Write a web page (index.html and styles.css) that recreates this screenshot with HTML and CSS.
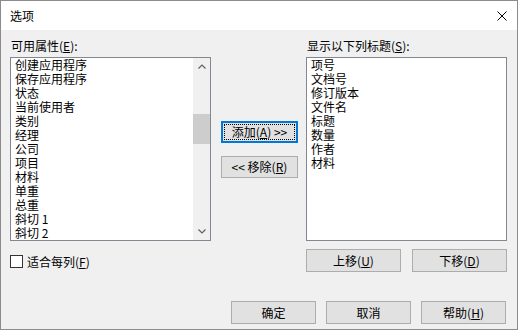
FILE: index.html
```html
<!DOCTYPE html>
<html lang="zh-CN">

<head>
    <meta charset="UTF-8">
    <meta name="viewport" content="width=device-width, initial-scale=1.0">
    <title>选项</title>
    <link rel="stylesheet" href="styles.css">
</head>

<body>
    <div class="okno">
        <div class="pasek">
            <span class="tytul">选项</span>
            <svg class="zamknij" width="10" height="10" viewBox="0 0 10 10">
                <path d="M0.5 0.5 L9.5 9.5 M9.5 0.5 L0.5 9.5" stroke="#000" stroke-width="1" fill="none" />
            </svg>
        </div>

        <div class="tresc">
            <div class="siatka">
                <div class="etykieta">可用属性(<u>E</u>):</div>
                <div></div>
                <div class="etykieta">显示以下列标题(<u>S</u>):</div>

                <div class="lista">
                    <div class="pozycje">
                        <div>创建应用程序</div>
                        <div>保存应用程序</div>
                        <div>状态</div>
                        <div>当前使用者</div>
                        <div>类别</div>
                        <div>经理</div>
                        <div>公司</div>
                        <div>项目</div>
                        <div>材料</div>
                        <div>单重</div>
                        <div>总重</div>
                        <div>斜切 1</div>
                        <div>斜切 2</div>
                    </div>
                    <div class="suwak">
                        <div class="strzalka">
                            <svg width="8" height="5" viewBox="0 0 8 5"><path d="M0.5 4.5 L4 1 L7.5 4.5" stroke="#606060" stroke-width="1.2" fill="none" /></svg>
                        </div>
                        <div class="tor">
                            <div class="kciuk"></div>
                        </div>
                        <div class="strzalka">
                            <svg width="8" height="5" viewBox="0 0 8 5"><path d="M0.5 0.5 L4 4 L7.5 0.5" stroke="#606060" stroke-width="1.2" fill="none" /></svg>
                        </div>
                    </div>
                </div>

                <div class="srodek">
                    <button class="przycisk aktywny">添加(<u>A</u>) &gt;&gt;</button>
                    <button class="przycisk">&lt;&lt; 移除(<u>R</u>)</button>
                </div>

                <div class="lista">
                    <div class="pozycje">
                        <div>项号</div>
                        <div>文档号</div>
                        <div>修订版本</div>
                        <div>文件名</div>
                        <div>标题</div>
                        <div>数量</div>
                        <div>作者</div>
                        <div>材料</div>
                    </div>
                </div>

                <label class="wybor">
                    <span class="kratka"></span>
                    <span>适合每列(<u>F</u>)</span>
                </label>
                <div></div>
                <div class="przesun">
                    <button class="przycisk">上移(<u>U</u>)</button>
                    <button class="przycisk">下移(<u>D</u>)</button>
                </div>
            </div>

            <div class="dol">
                <button class="przycisk">确定</button>
                <button class="przycisk">取消</button>
                <button class="przycisk">帮助(<u>H</u>)</button>
            </div>
        </div>
    </div>
</body>

</html>
```

FILE: styles.css
```css
body {
    margin: 0;
    font-family: "Noto Sans CJK SC", "Noto Sans", sans-serif;
    font-size: 12px;
    color: #000;
    background-color: #f0f0f0;
}

.okno {
    width: 518px;
    height: 330px;
    box-sizing: border-box;
    border: 1px solid #8c8c8c;
    background-color: #f0f0f0;
    overflow: hidden;
}

.pasek {
    height: 29px;
    background-color: #fff;
    display: flex;
    align-items: center;
    justify-content: space-between;
    padding-left: 9px;
    padding-right: 10px;
}

.tytul {
    line-height: 16px;
}

.tresc {
    padding: 8px 0 0 9px;
}

.siatka {
    display: grid;
    grid-template-columns: 201px 95px 201px;
}

.etykieta {
    line-height: 16px;
    padding-left: 1px;
    margin-bottom: 3px;
}

.lista {
    height: 184px;
    box-sizing: border-box;
    border: 1px solid #828790;
    background-color: #fff;
    display: flex;
}

.pozycje {
    flex: 1;
    padding: 0 0 0 4px;
    line-height: 14px;
    white-space: nowrap;
}

.suwak {
    width: 17px;
    background-color: #f0f0f0;
    display: flex;
    flex-direction: column;
}

.strzalka {
    height: 17px;
    display: flex;
    align-items: center;
    justify-content: center;
}

.tor {
    flex: 1;
    padding-top: 39px;
}

.kciuk {
    height: 30px;
    background-color: #cdcdcd;
}

.srodek {
    display: flex;
    flex-direction: column;
    gap: 13px;
    padding-top: 64px;
    padding-left: 10px;
}

.przycisk {
    font-family: inherit;
    font-size: 12px;
    color: #000;
    height: 23px;
    padding: 0;
    background-color: #e1e1e1;
    border: 1px solid #adadad;
    border-radius: 0;
    line-height: 16px;
}

.srodek .przycisk {
    width: 77px;
    height: 22px;
}

.aktywny {
    border-color: #0078d7;
    box-shadow: inset 0 0 0 1px #0078d7;
    outline: 1px dotted #000;
    outline-offset: -4px;
}

.wybor {
    display: flex;
    align-items: center;
    gap: 4px;
    margin-top: 10px;
    line-height: 14px;
}

.kratka {
    width: 11px;
    height: 11px;
    border: 1px solid #333;
    background-color: #fff;
}

.przesun {
    display: flex;
    gap: 11px;
    margin-top: 8px;
}

.przesun .przycisk {
    width: 95px;
}

.dol {
    display: flex;
    justify-content: flex-end;
    gap: 10px;
    margin-top: 29px;
    padding-right: 11px;
}

.dol .przycisk {
    width: 85px;
}
```
